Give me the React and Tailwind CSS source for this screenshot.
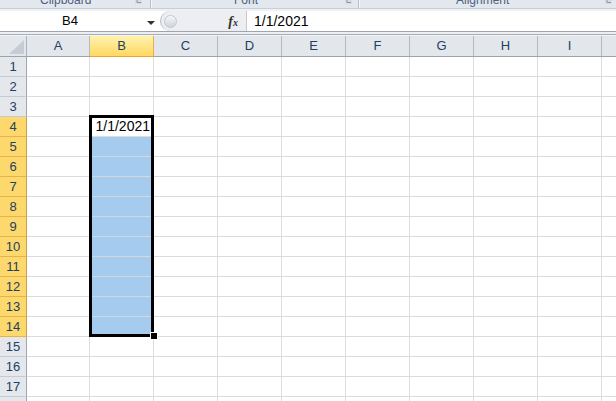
import React from 'react';

// column layout: row header is 27px, A is 63px, the rest 64px
const COLS = [
  { id: 'A', w: 'w-[63px]' },
  { id: 'B', w: 'w-[64px]' },
  { id: 'C', w: 'w-[64px]' },
  { id: 'D', w: 'w-[64px]' },
  { id: 'E', w: 'w-[64px]' },
  { id: 'F', w: 'w-[64px]' },
  { id: 'G', w: 'w-[64px]' },
  { id: 'H', w: 'w-[64px]' },
  { id: 'I', w: 'w-[64px]' },
  { id: 'J', w: 'w-[64px]' },
];

const ROWS = Array.from({ length: 18 }, (_, i) => i + 1);

const Launcher = () => (
  <svg width="8" height="5" viewBox="0 0 8 5" className="shrink-0">
    <rect x="0" y="0" width="7" height="4" fill="#d9dde3" />
    <path d="M2 0 V2.5 H6" stroke="#8d96a3" strokeWidth="1" fill="none" />
  </svg>
);

// ribbon group labels, cut off at the top of the window
const RibbonStrip = () => (
  <div className="flex h-[9px] shrink-0 overflow-hidden border-b border-[#c8ced6] bg-[#e3e8ee] text-[12px] text-[#4d6180]">
    <div className="flex w-[150px] shrink-0 items-start">
      <div className="flex-1 -mt-[6px] pl-[40px] leading-none">Clipboard</div>
      <div className="mr-[7px]"><Launcher /></div>
    </div>
    <div className="w-[2px] shrink-0 border-l border-[#b9c0ca] bg-[#f4f6f8]" />
    <div className="flex w-[206px] shrink-0 items-start">
      <div className="flex-1 -mt-[6px] pl-[82px] leading-none">Font</div>
      <div className="mr-[5px]"><Launcher /></div>
    </div>
    <div className="w-[2px] shrink-0 border-l border-[#b9c0ca] bg-[#f4f6f8]" />
    <div className="flex flex-1 items-start">
      <div className="flex-1 -mt-[6px] pl-[96px] leading-none">Alignment</div>
      <div className="mr-[3px]"><Launcher /></div>
    </div>
  </div>
);

const FormulaBar = () => (
  <div className="flex h-[21px] shrink-0 border-b border-[#9ea5ae] bg-white text-[13px] text-black">
    <div className="relative flex w-[160px] shrink-0 items-center justify-center">
      <span className="-ml-[20px]">B4</span>
      <svg width="8" height="4" viewBox="0 0 8 4" className="absolute left-[147px] top-[10px]">
        <path d="M0 0 H8 L4 4 Z" fill="#333" />
      </svg>
    </div>
    <div className="flex w-[86px] shrink-0 items-center rounded-l-full border-l border-[#b4bac2] bg-[#eceef1]">
      <div className="ml-[3px] h-[13px] w-[13px] rounded-full border border-[#c4c8ce] bg-gradient-to-b from-[#f7f8f9] to-[#cfd3d8]" />
      <span className="ml-auto mr-[8px] font-['Liberation_Serif',serif] text-[14px] font-bold italic text-[#333]">
        f<span className="text-[10px]">x</span>
      </span>
    </div>
    <div className="flex flex-1 items-center border-l border-[#c3c8cf] pl-[7px] text-[14px]">1/1/2021</div>
  </div>
);

const HeaderRow = () => (
  <div className="flex h-[21px] shrink-0 border-b border-[#9ba3ad] bg-[#e3e7ec] text-[13px] text-[#22405f]">
    <div className="relative w-[27px] shrink-0 border-r border-[#a8b0ba]">
      <svg width="15" height="14" viewBox="0 0 15 14" className="absolute bottom-[2px] right-[2px]">
        <path d="M15 0 V14 H0 Z" fill="#c7ccd3" />
      </svg>
    </div>
    {COLS.map((c) =>
      c.id === 'B' ? (
        <div
          key={c.id}
          className={`${c.w} -mb-px flex shrink-0 items-center justify-center border-r border-b border-r-[#e5ae48] border-b-[#e9a33a] bg-gradient-to-b from-[#fff1ad] to-[#ffd95f]`}
        >
          {c.id}
        </div>
      ) : (
        <div key={c.id} className={`${c.w} flex shrink-0 items-center justify-center border-r border-[#b3bac3]`}>
          {c.id}
        </div>
      )
    )}
  </div>
);

const Row = ({ n }) => {
  const sel = n >= 4 && n <= 14;
  return (
    <div className="flex h-[20px] shrink-0">
      <div
        className={`flex w-[27px] shrink-0 items-center justify-center border-r border-b text-[13px] text-[#22405f] ${
          sel ? 'border-r-[#c9a04a] border-b-[#e6b348] bg-[#fdd86c]' : 'border-r-[#9ea6b0] border-b-[#c5cbd2] bg-[#e4e7ec]'
        }`}
      >
        {n}
      </div>
      {COLS.map((c) => {
        if (c.id === 'B' && n === 4) {
          return (
            <div key={c.id} className={`${c.w} flex shrink-0 items-center justify-end border-r border-b border-[#dadcdd] bg-white pr-[3px] text-[14px] text-black`}>
              1/1/2021
            </div>
          );
        }
        if (c.id === 'B' && sel) {
          return <div key={c.id} className={`${c.w} shrink-0 border-r border-b border-r-[#dadcdd] border-b-[#d2d8df] bg-[#a5cbee]`} />;
        }
        return <div key={c.id} className={`${c.w} shrink-0 border-r border-b border-[#dadcdd] bg-white`} />;
      })}
    </div>
  );
};

export default function App() {
  return (
    <div className="relative flex h-[401px] w-[616px] flex-col overflow-hidden bg-white font-['Liberation_Sans',Arial,sans-serif]">
      <RibbonStrip />
      <div className="h-[2px] shrink-0 bg-[#eef1f4]" />
      <FormulaBar />
      <div className="h-[2px] shrink-0 bg-[#eceef1]" />
      <div className="h-px shrink-0 bg-[#a8aeb6]" />
      <div className="h-px shrink-0 bg-[#f1f3f5]" />
      <HeaderRow />
      {ROWS.map((n) => (
        <Row key={n} n={n} />
      ))}

      {/* selection outline B4:B14 and fill handle */}
      <div className="pointer-events-none absolute left-[89px] top-[115px] h-[222px] w-[65px] border-[3px] border-black" />
      <div className="pointer-events-none absolute left-[150px] top-[332px] h-[8px] w-[8px] border border-white bg-black" />
    </div>
  );
}
